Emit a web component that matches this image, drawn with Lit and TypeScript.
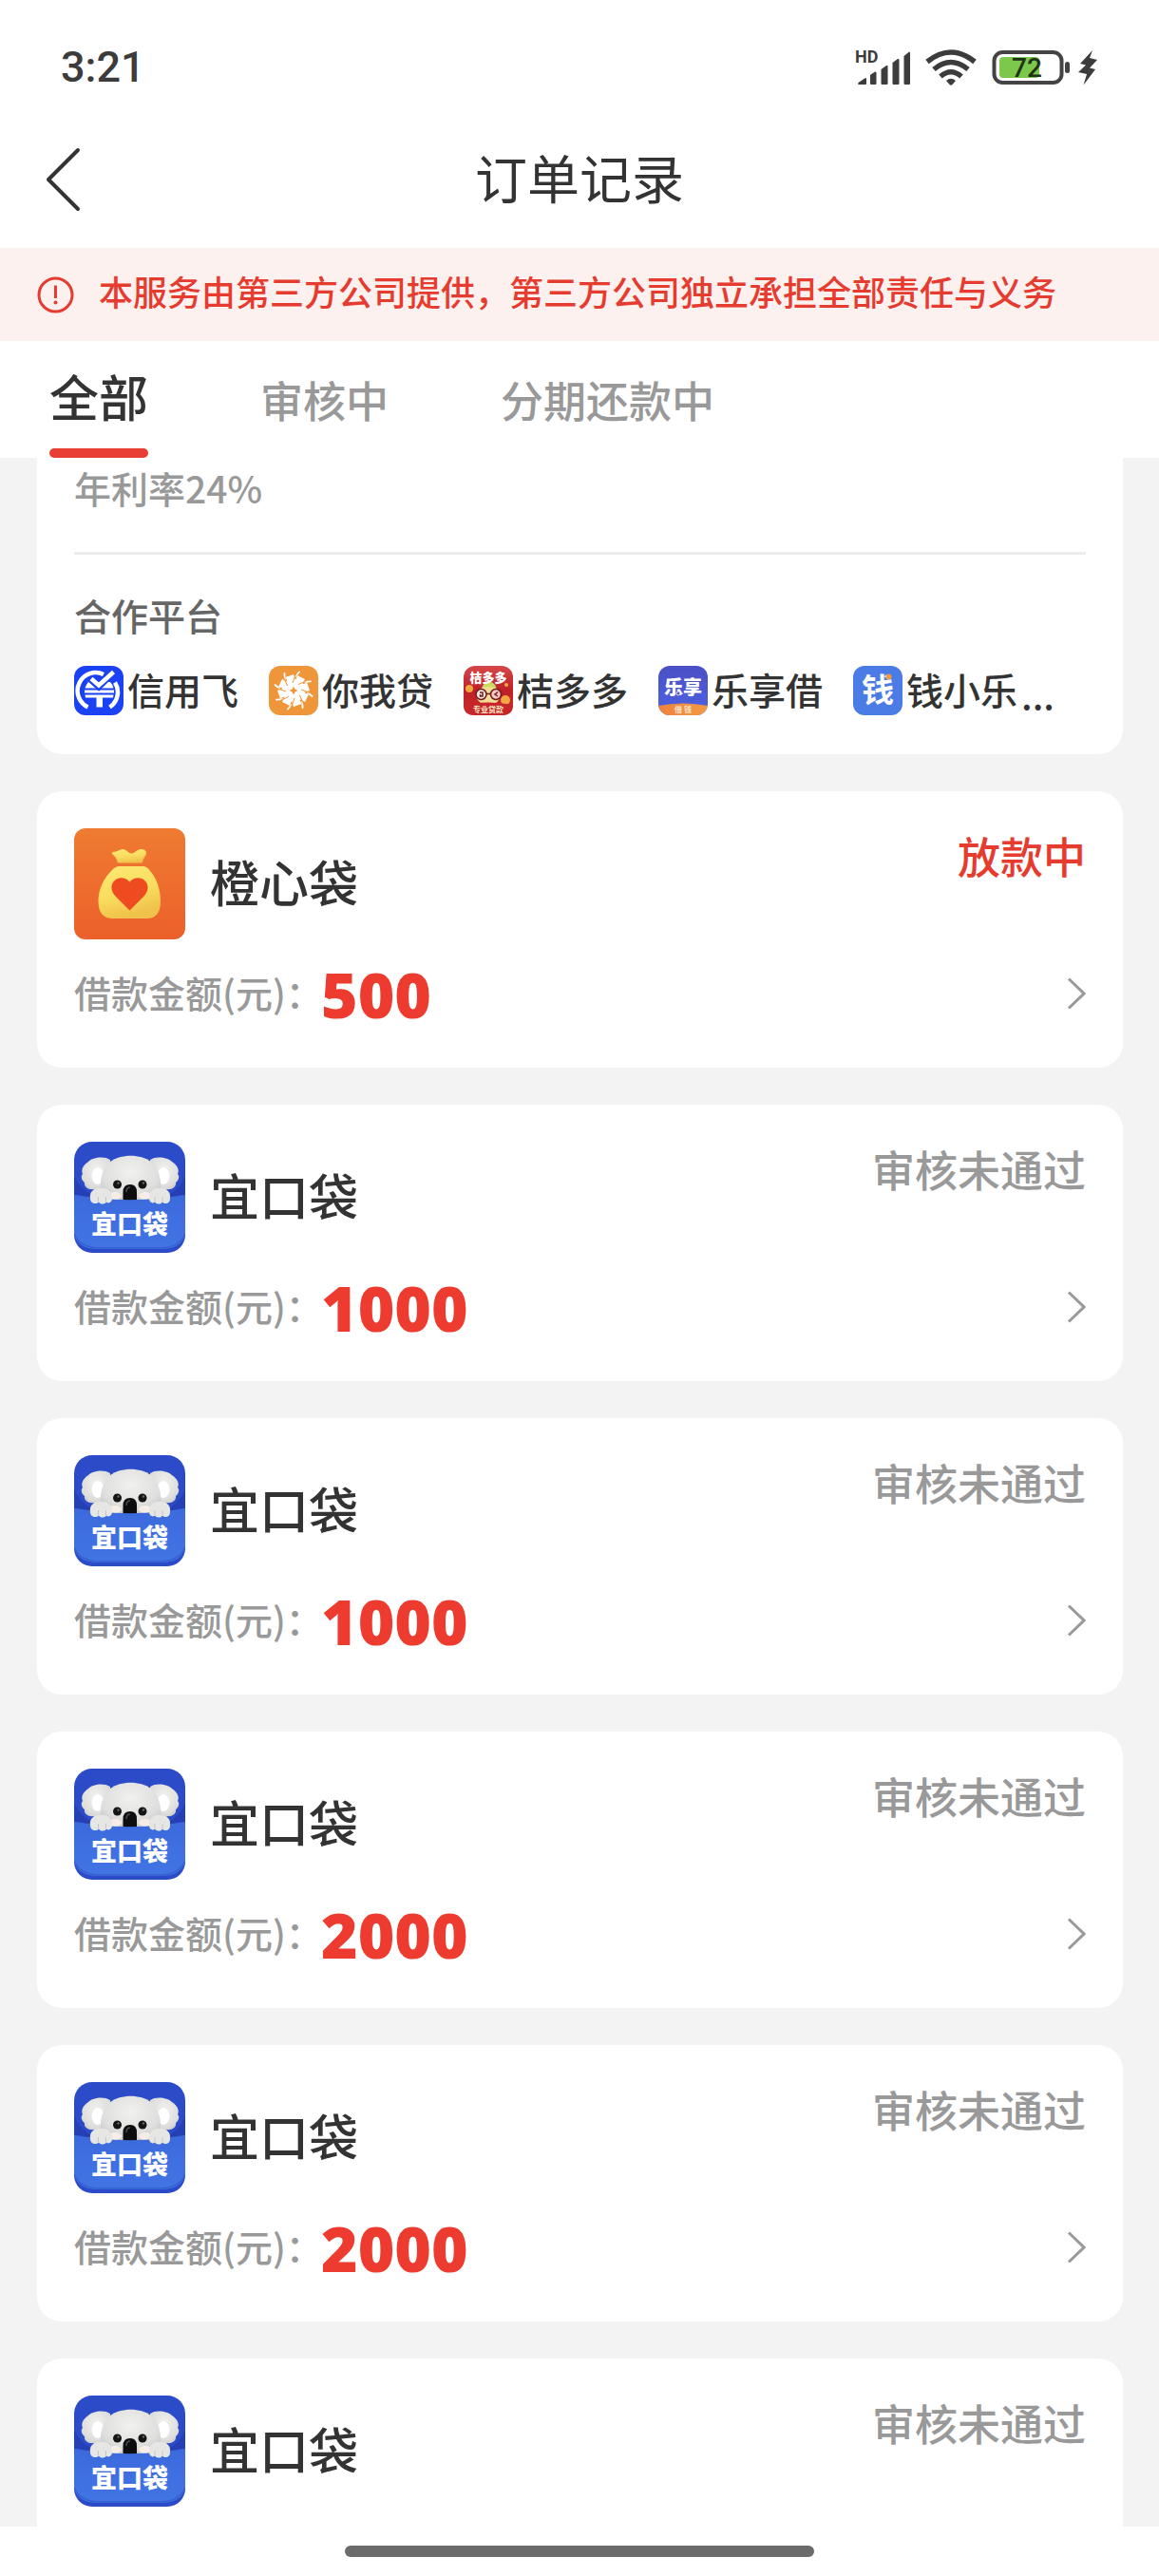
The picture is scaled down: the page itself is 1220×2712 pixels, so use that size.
import { LitElement, html, svg, css, nothing } from "lit";
import { customElement, property, state } from "lit/decorators.js";
import { classMap } from "lit/directives/class-map.js";

interface Order {
  product: "orange" | "koala";
  name: string;
  status: string;
  active?: boolean;
  amount?: number;
}

const ORDERS: Order[] = [
  { product: "orange", name: "橙心袋", status: "放款中", active: true, amount: 500 },
  { product: "koala", name: "宜口袋", status: "审核未通过", amount: 1000 },
  { product: "koala", name: "宜口袋", status: "审核未通过", amount: 1000 },
  { product: "koala", name: "宜口袋", status: "审核未通过", amount: 2000 },
  { product: "koala", name: "宜口袋", status: "审核未通过", amount: 2000 },
  { product: "koala", name: "宜口袋", status: "审核未通过" },
];

const TABS = ["全部", "审核中", "分期还款中"];

const logoFont = "'Noto Sans CJK SC', sans-serif";

const orangeLogo = html`<svg class="logo" viewBox="0 0 117 117" aria-hidden="true">
  <defs>
    <linearGradient id="bg" x1="0" y1="0" x2="0" y2="1"><stop offset="0" stop-color="#ef7b31" /><stop offset="1" stop-color="#ec602b" /></linearGradient>
    <linearGradient id="bag" x1="0" y1="0" x2="0.3" y2="1"><stop offset="0" stop-color="#fdea73" /><stop offset="0.6" stop-color="#f9dc5e" /><stop offset="1" stop-color="#f0c24b" /></linearGradient>
  </defs>
  <rect width="117" height="117" rx="12" fill="url(#bg)" />
  <path fill="url(#bag)" d="M46 36.500 C45 32 43 29.500 40.500 27.500 C39 25.500 40.500 24.500 43 24.700 C46 24.500 48 22 51 22 C55 22 56.500 26 60 26.500 C64 27 65.500 22 70.500 22 C75 22 77 25 75.500 28 C73.500 31 72.500 33.500 71.500 36.500 Z" />
  <path fill="url(#bag)" d="M47 40 H73 Q76 40 78 42.500 C87 52 91 64 91 77 C91 89 86 95 76 95 H41 C31 95 25.500 89 25.500 77 C25.500 64 31 52 41.500 42.500 Q44 40 47 40 Z" />
  <path fill="#ee4b20" d="M58.500 86.500 L43.500 71.500 C38 65.500 38.500 59 42.500 55.200 C47 51 54 51.500 58.500 56.500 C63 51.500 70 51 74.500 55.200 C78.500 59 79 65.500 73.500 71.500 Z" />
</svg>`;

const koalaLogo = html`<svg class="logo" viewBox="0 0 117 117" aria-hidden="true">
  <defs>
    <clipPath id="tile"><rect width="117" height="117" rx="19" /></clipPath>
    <radialGradient id="fur" cx="0.5" cy="0.35" r="0.7"><stop offset="0" stop-color="#f1f1f0" /><stop offset="0.7" stop-color="#dededd" /><stop offset="1" stop-color="#c4c4c6" /></radialGradient>
    <linearGradient id="pocket" x1="0" y1="0" x2="0" y2="1"><stop offset="0" stop-color="#3c6add" /><stop offset="1" stop-color="#4274e4" /></linearGradient>
  </defs>
  <g clip-path="url(#tile)">
    <rect width="117" height="117" fill="#2b4bc9" />
    <path fill="#253fb4" d="M0 36 Q6 50 22 58 H96 Q112 50 117 36 V70 H0 Z" />
    <path fill="url(#fur)" d="M38 19 C32 15 20 16 15 21 C9 25 7 30 9 34 C6 37 9 42 11 43 C10 48 16 51 20 50 C24 54 32 54 38 50 Z" />
    <path fill="url(#fur)" d="M80 19 C86 15 98 16 103 21 C109 25 111 30 109 34 C112 37 109 42 107 43 C108 48 102 51 98 50 C94 54 86 54 80 50 Z" />
    <ellipse cx="25" cy="36" rx="6.500" ry="9" fill="#fff" />
    <ellipse cx="94" cy="36" rx="6.500" ry="9" fill="#fff" />
    <path fill="url(#fur)" d="M30 62 C26 46 27 31 38 21 C49 12.500 70 12.500 81 21 C92 31 93 46 89 62 Z" />
    <circle cx="45.500" cy="45" r="4.500" fill="#151515" />
    <circle cx="72" cy="45" r="4.500" fill="#151515" />
    <circle cx="46.500" cy="43.500" r="1.200" fill="#666" />
    <circle cx="73" cy="43.500" r="1.200" fill="#666" />
    <ellipse cx="43" cy="57" rx="7" ry="4" fill="#f6eee6" />
    <ellipse cx="75" cy="57" rx="7" ry="4" fill="#f6eee6" />
    <path fill="#0d0d0f" d="M51.500 62 V53 Q51.500 45 59 45 Q66 45 66 53 V62 Z" />
    <path fill="none" stroke="#4b4b50" stroke-width="1.500" d="M55 53 Q55 48 59 48" />
    <path fill="url(#pocket)" d="M0 56 Q10 57 24 59.500 Q58 63 93 59.500 Q108 57 117 56 V98 Q112 113 92 113 H25 Q5 113 0 98 Z" />
    <path fill="none" stroke="#3560d0" stroke-width="1.500" d="M0 97 Q6 111 25 112 H92 Q111 111 117 97" />
    <path fill="#e6e6e5" d="M17 60 C16 53 20 49 27 49 C35 48 41 53 40 60 C40 64 36 65.500 34 63.500 C32 66.500 27 66 26 63.500 C23 66.500 17 65 17 60 Z" />
    <path fill="#e6e6e5" d="M79 60 C78 53 84 48 91 49 C98 49 102 53 101 60 C101 65 96 66.500 93 63.500 C92 66 87 66.500 85 63.500 C83 65.500 79 64 79 60 Z" />
    <path fill="none" stroke="#c6c6c8" stroke-width="1" d="M25.500 58 V63 M33.500 58 V63 M85 58 V63 M93 58 V63" />
    <text x="58.500" y="97" text-anchor="middle" font-size="27" font-weight="900" fill="#fff" font-family=${logoFont}>宜口袋</text>
  </g>
</svg>`;

const blades = [0, 45, 90, 135, 180, 225, 270, 315].map(
  (a) => svg`<g transform="rotate(${a} 26 26)">
    <path fill="#fff" d="M23 23 L17.500 12 L26 9 L30 21.500 Z" />
    <path stroke="#fff" stroke-width="1.800" stroke-linecap="round" d="M28 11 L32 6.500" />
    <path stroke="#f0963a" stroke-width="1" d="M25 18 L28.500 8.500" />
  </g>`
);

const platforms = [
  {
    name: "信用飞",
    icon: html`<svg class="mini" viewBox="0 0 52 52" aria-hidden="true">
      <rect width="52" height="52" rx="12" fill="#1b41f4" />
      <path fill="none" stroke="#fff" stroke-width="4.500" d="M14.500 43.500 A19 19 0 0 1 31 9 M43 17.500 A19 19 0 0 1 37.500 43.500" />
      <path fill="#fff" d="M15 17 H38 Q41 20 41.500 23.500 H11.500 Q12.500 20 15 17 Z M11 25.500 H42 V28.500 H11 Z M11.500 30.500 H41.500 L41 33.500 H30 V43.500 H23.500 V33.500 H12 Z" />
      <path fill="none" stroke="#1b41f4" stroke-width="7" d="M17 14 L26 22 L41 7" />
      <path fill="none" stroke="#fff" stroke-width="4.500" d="M18 13.500 L26 20.500 L41.500 6.500" />
    </svg>`,
  },
  {
    name: "你我贷",
    icon: html`<svg class="mini" viewBox="0 0 52 52" aria-hidden="true">
      <rect width="52" height="52" rx="12" fill="#f0963a" />
      <circle cx="26" cy="26" r="12" fill="#fff" />
      ${blades}
      <path fill="#f0963a" d="M26 21.500 L27.500 24.500 L30.500 26 L27.500 27.500 L26 30.500 L24.500 27.500 L21.500 26 L24.500 24.500 Z" />
    </svg>`,
  },
  {
    name: "桔多多",
    icon: html`<svg class="mini" viewBox="0 0 52 52" aria-hidden="true">
      <defs><linearGradient id="red" x1="0" y1="0" x2="0" y2="1"><stop offset="0" stop-color="#d6484a" /><stop offset="0.5" stop-color="#bd2127" /><stop offset="1" stop-color="#cf2a2c" /></linearGradient></defs>
      <rect width="52" height="52" rx="12" fill="url(#red)" />
      <path fill="#c9dc62" d="M20 21 Q27 13 33 20 L36 27 H18 Z" />
      <path fill="#f3dc96" d="M16 25 Q26 19 36 25 L39 32 Q36 41 26 41 Q16 41 13 32 Z" />
      <circle cx="6" cy="24" r="4" fill="#f0a83f" />
      <circle cx="44" cy="36" r="5" fill="#f1a93f" />
      <circle cx="45" cy="20" r="2" fill="#f1a93f" />
      <circle cx="18.500" cy="30" r="5.500" fill="#fbe9e2" stroke="#6e1b1d" stroke-width="1.500" />
      <circle cx="34" cy="30" r="5.500" fill="#f7c9c4" stroke="#6e1b1d" stroke-width="1.500" />
      <path fill="none" stroke="#6e1b1d" stroke-width="1.500" d="M24 29.500 H28.500 M36 27.500 L33 30 L36 32 M17 28 H20 V32 H17.500 V30" />
      <path fill="#c6262a" d="M0 41 Q26 36 52 41 V42 Q52 52 40 52 H12 Q0 52 0 42 Z" />
      <text x="26" y="17" text-anchor="middle" font-size="13" font-weight="900" fill="#fff" font-family=${logoFont}>桔多多</text>
      <text x="26" y="48.500" text-anchor="middle" font-size="8" font-weight="700" fill="#ffe9c4" font-family=${logoFont}>专业贷款</text>
    </svg>`,
  },
  {
    name: "乐享借",
    icon: html`<svg class="mini" viewBox="0 0 52 52" aria-hidden="true">
      <defs>
        <clipPath id="round"><rect width="52" height="52" rx="12" /></clipPath>
        <linearGradient id="violet" x1="0" y1="0" x2="0" y2="1"><stop offset="0" stop-color="#4b4fc4" /><stop offset="1" stop-color="#4d63e4" /></linearGradient>
        <linearGradient id="amber" x1="0" y1="0" x2="1" y2="0"><stop offset="0" stop-color="#f0823f" /><stop offset="1" stop-color="#f39a45" /></linearGradient>
      </defs>
      <g clip-path="url(#round)">
        <rect width="52" height="52" fill="url(#violet)" />
        <path fill="url(#amber)" d="M0 42 Q26 37 52 42 V52 H0 Z" />
        <text x="26" y="30" text-anchor="middle" font-size="20" font-weight="900" fill="#fff" font-family=${logoFont}>乐享</text>
        <circle cx="21" cy="29" r="2" fill="#4d5bd8" stroke="#dfe3fb" stroke-width="1" />
        <text x="26" y="48.500" text-anchor="middle" font-size="8" font-weight="700" fill="#ffe6d0" font-family=${logoFont}>借 钱</text>
      </g>
    </svg>`,
  },
  {
    name: "钱小乐",
    icon: html`<svg class="mini" viewBox="0 0 52 52" aria-hidden="true">
      <rect width="52" height="52" rx="12" fill="#4b7ce6" />
      <text x="26" y="38" text-anchor="middle" font-size="34" font-weight="700" fill="#fff" font-family=${logoFont}>钱</text>
      <circle cx="37.500" cy="11.500" r="3" fill="#ee9a45" />
    </svg>`,
  },
];

@customElement("order-card")
class OrderCard extends LitElement {
  @property({ attribute: false }) order!: Order;

  static styles = css`
    :host {
      display: block;
    }
    .card {
      box-sizing: border-box;
      min-height: 291px;
      padding: 39px;
      border-radius: 26px;
      background: #fff;
    }
    .top {
      display: flex;
      align-items: flex-start;
    }
    .logo {
      display: block;
      flex: none;
      width: 117px;
      height: 117px;
    }
    .name {
      flex: 1;
      margin: 0 0 0 26px;
      font-size: 52px;
      line-height: 112px;
      font-weight: 500;
      color: #333;
    }
    .status {
      font-size: 45px;
      line-height: 58px;
      font-weight: 500;
      color: #999;
    }
    .status.active {
      color: #e63b2f;
    }
    .detail {
      display: flex;
      align-items: center;
      box-sizing: border-box;
      width: 100%;
      height: 78px;
      margin: 18px 0 0;
      padding: 0;
      border: 0;
      background: none;
      font: inherit;
      text-align: left;
    }
    .label {
      flex: none;
      width: 260px;
      padding-bottom: 4px;
      font-size: 39px;
      line-height: 52px;
      font-weight: 500;
      white-space: nowrap;
      color: #999;
    }
    .amount {
      flex: 1;
      font-family: "Open Sans", "Noto Sans", sans-serif;
      font-size: 66px;
      line-height: 78px;
      font-weight: 800;
      color: #ee3b30;
    }
    .go {
      width: 20px;
      height: 34px;
    }
  `;

  render() {
    const o = this.order;
    return html`<article class="card">
      <div class="top">
        ${o.product === "orange" ? orangeLogo : koalaLogo}
        <h2 class="name">${o.name}</h2>
        <span class=${classMap({ status: true, active: !!o.active })}>${o.status}</span>
      </div>
      ${o.amount === undefined
        ? nothing
        : html`<button class="detail">
            <span class="label">借款金额(元)：</span>
            <span class="amount">${o.amount}</span>
            <svg class="go" viewBox="0 0 20 34" aria-hidden="true">
              <path fill="none" stroke="#999" stroke-width="3" d="M2 1.500 L18 17 L2 32.500" />
            </svg>
          </button>`}
    </article>`;
  }
}

@customElement("app-root")
class AppRoot extends LitElement {
  @state() private tab = 0;

  static styles = css`
    :host {
      display: flex;
      flex-direction: column;
      height: 100vh;
      background: #fff;
      color: #333;
      font-family: "Noto Sans CJK SC", sans-serif;
    }
    button {
      margin: 0;
      padding: 0;
      border: 0;
      background: none;
      font: inherit;
      color: inherit;
    }
    .statusbar {
      display: flex;
      align-items: center;
      justify-content: space-between;
      box-sizing: border-box;
      height: 116px;
      padding: 26px 64px 0;
    }
    .clock {
      font-family: Roboto, sans-serif;
      font-size: 45px;
      line-height: 56px;
      font-weight: 500;
      color: #3c3c3c;
    }
    .indicators {
      display: flex;
      align-items: center;
      gap: 16px;
    }
    .indicators svg {
      display: block;
    }
    .header {
      display: grid;
      grid-template-columns: 1fr auto 1fr;
      align-items: center;
      height: 145px;
      padding: 0 46px;
    }
    .back {
      justify-self: start;
      width: 40px;
      height: 68px;
    }
    .back svg {
      display: block;
    }
    .title {
      margin: 0;
      font-size: 55px;
      line-height: 72px;
      font-weight: 400;
      padding-bottom: 8px;
    }
    .notice {
      display: flex;
      align-items: center;
      gap: 26px;
      height: 98px;
      padding: 0 39px;
      background: #fdf1f0;
      color: #e63b2f;
    }
    .notice svg {
      flex: none;
    }
    .notice-text {
      margin: 0;
      padding-bottom: 8px;
      font-size: 36px;
      line-height: 52px;
      font-weight: 500;
      white-space: nowrap;
    }
    .tabs {
      display: flex;
      gap: 118px;
      height: 123px;
      padding: 0 52px;
    }
    .tab {
      display: flex;
      flex-direction: column;
      justify-content: space-between;
      font-size: 45px;
      line-height: 123px;
      color: #999;
      font-weight: 500;
      white-space: nowrap;
    }
    .tab.on {
      font-size: 52px;
      line-height: 115px;
      color: #333;
    }
    .tab.on::after {
      content: "";
      flex: none;
      height: 10px;
      margin-top: -2px;
      border-radius: 5px;
      background: #e83e33;
    }
    .list {
      flex: 1;
      min-height: 0;
      display: flex;
      flex-direction: column;
      gap: 39px;
      padding: 0 38px 0 39px;
      overflow-y: auto;
      scrollbar-width: none;
      background: #f3f3f3;
    }
    .list > * {
      flex: none;
    }
    .summary {
      padding: 0 39px 33px;
      border-radius: 0 0 26px 26px;
      background: #fff;
    }
    .rate {
      margin: 0;
      padding-bottom: 37px;
      border-bottom: 3px solid #ececec;
      font-size: 39px;
      line-height: 62px;
      font-weight: 500;
      color: #999;
    }
    .partners-title {
      margin: 37px 0 28px;
      font-size: 39px;
      line-height: 52px;
      font-weight: 500;
      color: #666;
    }
    .partners {
      display: flex;
      gap: 32px;
      margin: 0;
      padding: 0;
      list-style: none;
      font-size: 39px;
      line-height: 48px;
      font-weight: 500;
      white-space: nowrap;
    }
    .partner {
      display: flex;
      align-items: flex-start;
      gap: 4px;
    }
    .mini {
      flex: none;
      width: 52px;
      height: 52px;
    }
    .more {
      line-height: 60px;
    }
    .homebar {
      display: flex;
      justify-content: center;
      align-items: center;
      height: 52px;
      background: #fff;
    }
    .homebar span {
      width: 494px;
      height: 12px;
      border-radius: 6px;
      background: #6b6b6b;
    }
  `;

  render() {
    return html`
      <div class="statusbar">
        <span class="clock">3:21</span>
        <div class="indicators">
          <svg width="58" height="48" viewBox="0 -4 58 48" aria-hidden="true">
            <text x="0" y="15" font-size="18" font-weight="700" fill="#3c3c3c" font-family="Roboto, sans-serif">HD</text>
            <g fill="#3c3c3c">
              <path d="M3.500 36 L11 31 Q12 31 12 32 V37 Q12 38 11 38 H4 Q2.500 38 3.500 36 Z" />
              <path d="M16 28 L21 24.500 Q22.500 24 22.500 26 V37 Q22.500 38 21.500 38 H17 Q16 38 16 37 Z" />
              <path d="M27.500 22 L33 18 Q34.500 17.500 34.500 19 V37 Q34.500 38 33.500 38 H28.500 Q27.500 38 27.500 37 Z" />
              <path d="M39.500 15 L45 11 Q46.500 10.500 46.500 12 V37 Q46.500 38 45.500 38 H40.500 Q39.500 38 39.500 37 Z" />
              <path d="M51.500 8 L57 3.500 Q58 3.500 58 5 V37 Q58 38 57 38 H52.500 Q51.500 38 51.500 37 Z" />
            </g>
          </svg>
          <svg width="54" height="40" viewBox="0 0 54 40" aria-hidden="true">
            <g fill="none" stroke="#3c3c3c" stroke-width="5.500">
              <path d="M2 14 Q27 -6 52 14" />
              <path d="M9 22 Q27 7 45 22" />
              <path d="M16 29.500 Q27 20 38 29.500" />
            </g>
            <path fill="#3c3c3c" d="M22 34 Q27 29.500 32 34 L28.500 38 Q27 39.500 25.500 38 Z" />
          </svg>
          <svg width="112" height="40" viewBox="0 0 112 40" aria-hidden="true">
            <rect x="2.500" y="4" width="71" height="32" rx="9" fill="#fff" stroke="#444" stroke-width="4" />
            <rect x="8" y="9" width="42" height="22" rx="4" fill="#7cc84b" />
            <rect x="77" y="14" width="5" height="12" rx="2.500" fill="#444" />
            <text x="37" y="30" text-anchor="middle" font-size="28" font-weight="500" fill="#1d3315" font-family="Roboto, sans-serif">72</text>
            <path fill="#3c3c3c" d="M106 2 L93 16 L99 17.500 L91 25 L100 27 L96.500 38.500 L109 22 L103 20.500 L111 12 L103 10 Z" />
          </svg>
        </div>
      </div>
      <header class="header">
        <button class="back" aria-label="返回">
          <svg width="40" height="68" viewBox="0 0 40 68" aria-hidden="true">
            <path fill="none" stroke="#333" stroke-width="4" stroke-linecap="round" stroke-linejoin="round" d="M36 3 L5 34 L36 65" />
          </svg>
        </button>
        <h1 class="title">订单记录</h1>
      </header>
      <div class="notice">
        <svg width="39" height="39" viewBox="0 0 39 39" aria-hidden="true">
          <circle cx="19.500" cy="19.500" r="17.500" fill="none" stroke="#e63b2f" stroke-width="3" />
          <path stroke="#e63b2f" stroke-width="3" d="M19.500 9.500 V23" />
          <circle cx="19.500" cy="27.500" r="2" fill="#e63b2f" />
        </svg>
        <p class="notice-text">本服务由第三方公司提供，第三方公司独立承担全部责任与义务</p>
      </div>
      <nav class="tabs">
        ${TABS.map(
          (t, i) => html`<button class=${classMap({ tab: true, on: this.tab === i })} @click=${() => (this.tab = i)}>${t}</button>`
        )}
      </nav>
      <main class="list">
        <section class="summary">
          <p class="rate">年利率24%</p>
          <h2 class="partners-title">合作平台</h2>
          <ul class="partners">
            ${platforms.map(
              (p, i) => html`<li class="partner">
                ${p.icon}<span>${p.name}</span>${i === platforms.length - 1 ? html`<span class="more">...</span>` : nothing}
              </li>`
            )}
          </ul>
        </section>
        ${ORDERS.map((o) => html`<order-card .order=${o}></order-card>`)}
      </main>
      <div class="homebar"><span></span></div>
    `;
  }
}
